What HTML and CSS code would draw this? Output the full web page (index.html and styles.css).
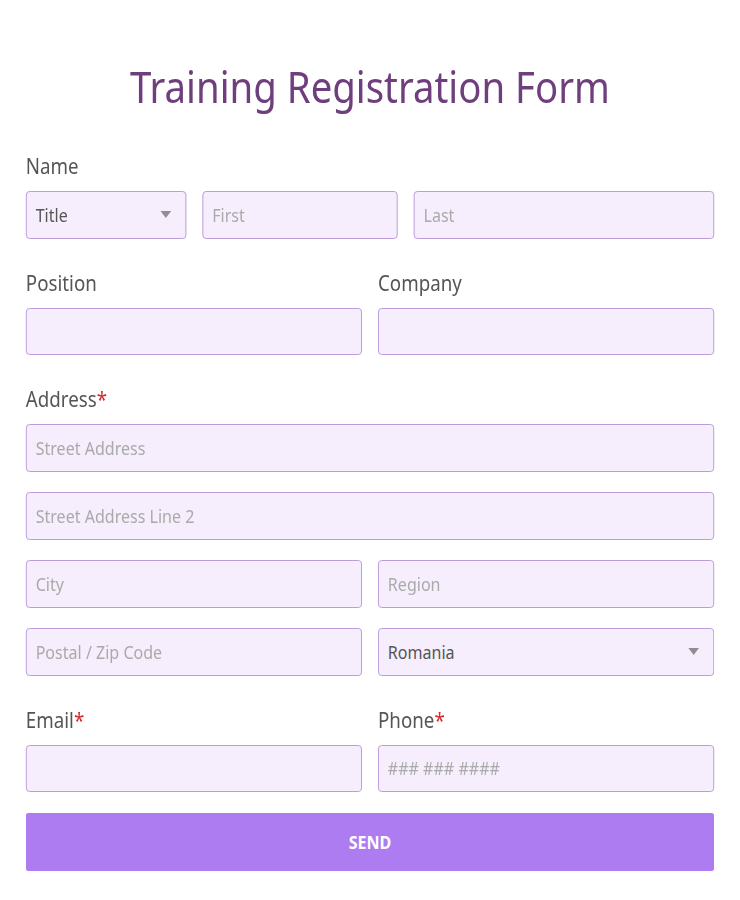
FILE: index.html
```html
<!DOCTYPE html>
<html lang="en">
<head>
<meta charset="utf-8">
<title>Training Registration Form</title>
<link rel="stylesheet" href="styles.css">
</head>
<body>
<div class="frame">
<div class="page">
<form class="form">
  <h1 class="title">Training Registration Form</h1>

  <div class="group">
    <div class="label">Name</div>
    <div class="row row-name">
      <div class="field select"><span class="value">Title</span><svg class="caret" width="12" height="7" viewBox="0 0 12 7"><path d="M0 0h12L6 7z" fill="#8f8f8f"/></svg></div>
      <input class="field" type="text" placeholder="First">
      <input class="field" type="text" placeholder="Last">
    </div>
  </div>

  <div class="group">
    <div class="row row-two">
      <div>
        <div class="label">Position</div>
        <input class="field" type="text">
      </div>
      <div>
        <div class="label">Company</div>
        <input class="field" type="text">
      </div>
    </div>
  </div>

  <div class="group">
    <div class="label">Address<span class="req">*</span></div>
    <div class="stack">
      <input class="field" type="text" placeholder="Street Address">
      <input class="field" type="text" placeholder="Street Address Line 2">
      <div class="row row-two">
        <input class="field" type="text" placeholder="City">
        <input class="field" type="text" placeholder="Region">
      </div>
      <div class="row row-two">
        <input class="field" type="text" placeholder="Postal / Zip Code">
        <div class="field select"><span class="value">Romania</span><svg class="caret" width="12" height="7" viewBox="0 0 12 7"><path d="M0 0h12L6 7z" fill="#8f8f8f"/></svg></div>
      </div>
    </div>
  </div>

  <div class="group">
    <div class="row row-two">
      <div>
        <div class="label">Email<span class="req">*</span></div>
        <input class="field" type="text">
      </div>
      <div>
        <div class="label">Phone<span class="req">*</span></div>
        <input class="field" type="text" placeholder="### ### ####">
      </div>
    </div>
  </div>

  <button class="send" type="button">SEND</button>
</form>
</div>
</div>
</body>
</html>
```

FILE: styles.css
```css
html, body {
  margin: 0;
  padding: 0;
  background: #ffffff;
  overflow: hidden;
}

body {
  font-family: "Noto Sans", "Open Sans", "Liberation Sans", sans-serif;
  color: #555555;
}

.frame {
  width: 100%;
  overflow: hidden;
}

/* the layout is drawn at 830px and compressed horizontally to fit 740px */
.page {
  width: 830px;
  transform: scaleX(0.8916);
  transform-origin: 0 0;
}

.form {
  padding: 58px 29px 0 29px;
  display: flex;
  flex-direction: column;
}

.title {
  margin: 0 0 38px 0;
  text-align: center;
  font-size: 43px;
  line-height: 58px;
  font-weight: 400;
  color: #6f3f7d;
}

.group {
  margin-bottom: 32px;
}

.label {
  font-size: 21px;
  line-height: 24px;
  margin-bottom: 13px;
  color: #555555;
}

.req {
  color: #d12b2b;
}

.row {
  display: grid;
  gap: 18px;
}

.row-name {
  grid-template-columns: 180px 219px 1fr;
}

.row-two {
  grid-template-columns: 1fr 1fr;
}

.stack {
  display: flex;
  flex-direction: column;
  gap: 20.5px;
}

.field {
  box-sizing: border-box;
  width: 100%;
  height: 47.5px;
  margin: 0;
  padding: 0 10px;
  border: 1px solid #b898d8;
  border-radius: 4px;
  background: #f6eefd;
  font-family: inherit;
  font-size: 18px;
  color: #555555;
  outline: none;
}

.field::placeholder {
  color: #aaaaaa;
}

.select {
  display: flex;
  align-items: center;
  justify-content: space-between;
  padding-right: 16px;
}

.caret {
  display: block;
}

.send {
  box-sizing: border-box;
  width: 100%;
  height: 58px;
  margin-top: -11px;
  border: none;
  border-radius: 3px;
  background: #ac7cf0;
  color: #ffffff;
  font-family: inherit;
  font-size: 18px;
  font-weight: 700;
}
```
